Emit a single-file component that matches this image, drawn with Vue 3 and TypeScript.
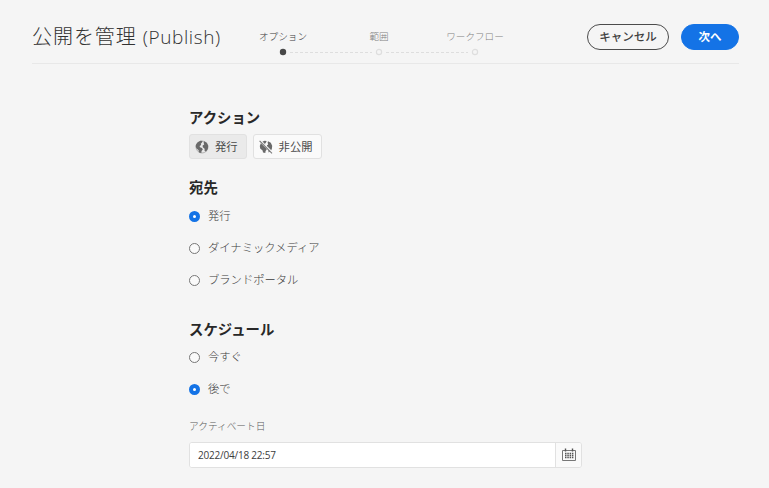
<script setup lang="ts">
import { ref } from 'vue'

const steps: string[] = ['オプション', '範囲', 'ワークフロー']
const currentStep = ref(0)
const action = ref('publish')
const destinations: string[] = ['発行', 'ダイナミックメディア', 'ブランドポータル']
const destination = ref(0)
const schedules: string[] = ['今すぐ', '後で']
const schedule = ref(1)
const activationDate = ref('2022/04/18 22:57')
</script>

<template>
  <main class="page">
    <header class="header">
      <h1 class="title"><span class="title-main">公開を管理</span><span class="title-sub">(Publish)</span></h1>
      <ol class="steps">
        <li v-for="(step, i) in steps" :key="step" class="step" :class="{ active: i === currentStep }">
          <span class="step-label">{{ step }}</span>
          <span class="track">
            <svg class="rail" width="96" height="8" viewBox="0 0 96 8">
              <path v-if="i > 0" d="M0 4.5H41" stroke="#dedede" stroke-dasharray="3 2" stroke-dashoffset="1" />
              <circle v-if="i === currentStep" cx="48" cy="4" r="3.2" fill="#484848" />
              <circle v-else cx="48" cy="4" r="2.6" fill="#f5f5f5" stroke="#dedede" stroke-width="1.2" />
              <path v-if="i < steps.length - 1" d="M55 4.5H96" stroke="#dedede" stroke-dasharray="3 2" />
            </svg>
          </span>
        </li>
      </ol>
      <div class="buttons">
        <button class="pill cancel">キャンセル</button>
        <button class="pill next" @click="currentStep = Math.min(currentStep + 1, 2)">次へ</button>
      </div>
    </header>

    <form class="form" @submit.prevent>
      <h2 class="heading">アクション</h2>
      <div class="actions">
        <button class="action" :class="{ selected: action === 'publish' }" @click="action = 'publish'">
          <svg class="globe" width="14" height="14" viewBox="0 0 14 14">
            <circle cx="7" cy="7" r="6" fill="none" stroke="#a4a4a4" stroke-width=".8" />
            <path d="M.8 5 2.4 2.4 5.4 .8 7.6 1 7 2.6 5.8 3.8 6.2 5 4.6 6 5 7.2 7 8 7.8 9.4 6.6 11 6.3 13.1 4 12.4 3.6 10.2 1.6 8.6 .8 7ZM9 1.2 11.8 2.8 13.2 5.7 12.9 8.8 11.2 11.6 9.6 11 9.6 8.8 7.8 7.2 7.6 5.6 9.2 4.4 8.6 2.8Z" fill="#6a6a6a" />
          </svg>
          <span>発行</span>
        </button>
        <button class="action" :class="{ selected: action === 'unpublish' }" @click="action = 'unpublish'">
          <svg class="globe" width="14" height="14" viewBox="0 0 14 14">
            <path d="M.8 6 1.8 3.3 7 8.2 7.8 9.5 6.6 11 6.3 13.1 4 12.4 3.6 10.4 1.2 8.6ZM3.2 1.8 5.6 .8 7.6 1 7 2.6 6 3.8 6.3 5ZM9 1.2 11.8 2.8 13.2 5.7 12.9 8.8 12.1 10.4 7.8 6.2 8 5.2 9.2 4.4 8.6 2.8ZM9.3 9.4 11.2 11.4 9.6 12.4Z" fill="#6a6a6a" />
            <path d="M1.8 .4 13.7 12.3" stroke="#fafafa" stroke-width="1" />
            <path d="M.6 .9 13 13.3" stroke="#777" stroke-width="1.1" />
          </svg>
          <span>非公開</span>
        </button>
      </div>

      <h2 class="heading destination-heading">宛先</h2>
      <div class="radios destinations">
        <label v-for="(item, i) in destinations" :key="item" class="radio" @click="destination = i">
          <span class="dot" :class="{ checked: destination === i }"></span>
          <span class="radio-text">{{ item }}</span>
        </label>
      </div>

      <h2 class="heading schedule-heading">スケジュール</h2>
      <div class="radios">
        <label v-for="(item, i) in schedules" :key="item" class="radio" @click="schedule = i">
          <span class="dot" :class="{ checked: schedule === i }"></span>
          <span class="radio-text">{{ item }}</span>
        </label>
      </div>

      <div class="date-label">アクティベート日</div>
      <div class="date-field">
        <input v-model="activationDate" class="date-input" type="text" />
        <button class="calendar">
          <svg width="14" height="14" viewBox="0 0 14 14">
            <path d="M.5 2.5H13.5V12.5H.5Z" fill="none" stroke="#777" />
            <path d="M3.5.5v3M10.5.5v3" stroke="#555" stroke-width="1.4" />
            <path d="M3 5.5h8.5M3 7.5h8.5M3 9.5h8.5" stroke="#555" stroke-width="1.4" stroke-dasharray="1.5 .8" />
          </svg>
        </button>
      </div>
    </form>
  </main>
</template>

<style>
body {
  margin: 0;
  background: #f5f5f5;
}
</style>

<style scoped>
.page {
  box-sizing: border-box;
  height: 488px;
  overflow: hidden;
  background: #f5f5f5;
  color: #4b4b4b;
  font-family: "Noto Sans CJK JP", sans-serif;
}
button {
  padding: 0;
  font-family: inherit;
}
.header {
  display: flex;
  box-sizing: border-box;
  height: 64px;
  margin: 0 30px 0 32px;
  border-bottom: 1px solid #e8e8e8;
}
.title {
  display: flex;
  align-items: baseline;
  gap: 6px;
  width: 203px;
  height: 30px;
  margin: 21px 0 0;
  color: #323232;
  font-size: 20px;
  font-weight: 300;
  line-height: 30px;
  white-space: nowrap;
}
.title-main {
  letter-spacing: 0.95px;
}
.title-sub {
  font-size: 19px;
  font-family: "Open Sans", sans-serif;
  font-weight: 300;
  letter-spacing: 0.6px;
}
.steps {
  display: flex;
  margin: 28px 0 0;
  padding: 0;
  list-style: none;
}
.step {
  display: flex;
  flex-direction: column;
  align-items: center;
  width: 96px;
  color: #808080;
  font-size: 9.6px;
  font-weight: 300;
  line-height: 16px;
}
.step.active {
  color: #3c3c3c;
}
.track {
  display: flex;
  margin-top: 4px;
}
.buttons {
  display: flex;
  gap: 12px;
  margin: 24px 0 0 auto;
}
.pill {
  box-sizing: border-box;
  height: 26px;
  padding-bottom: 2px;
  border: 1px solid #4b4b4b;
  border-radius: 13px;
  font-size: 11.5px;
  line-height: 22px;
}
.cancel {
  width: 82px;
  background: transparent;
  color: #404040;
  font-weight: 500;
}
.next {
  width: 58px;
  border-color: #1473e6;
  background: #1473e6;
  color: #fff;
  font-weight: 700;
}
.form {
  width: 393px;
  margin-left: 189px;
  padding-top: 43px;
}
.heading {
  margin: 0;
  color: #282828;
  font-size: 14.4px;
  font-weight: 700;
  line-height: 20px;
}
.actions {
  display: flex;
  gap: 6px;
  margin-top: 7px;
}
.action {
  display: flex;
  align-items: center;
  box-sizing: border-box;
  gap: 6px;
  height: 25px;
  padding: 0 8px 0 5px;
  border: 1px solid #e1e1e1;
  border-radius: 3px;
  background: #fafafa;
  color: #4b4b4b;
  font-size: 11.3px;
  line-height: 23px;
}
.action.selected {
  background: #eaeaea;
}
.destination-heading {
  margin-top: 18px;
}
.radios {
  display: flex;
  flex-direction: column;
  gap: 12px;
  margin-top: 8px;
}
.destinations {
  margin-top: 9px;
}
.radio {
  display: flex;
  align-items: center;
  gap: 8px;
  height: 20px;
  color: #3c3c3c;
  font-size: 11.3px;
  font-weight: 300;
  line-height: 20px;
}
.radio-text {
  padding-bottom: 2px;
  line-height: 18px;
}
.dot {
  box-sizing: border-box;
  width: 11px;
  height: 11px;
  border: 1px solid #777;
  border-radius: 50%;
  background: #fafafa;
}
.dot.checked {
  border: 4px solid #1473e6;
  background: #fff;
}
.schedule-heading {
  margin-top: 29px;
}
.date-label {
  margin-top: 19px;
  color: #5a5a5a;
  font-size: 9.7px;
  font-weight: 300;
  line-height: 16px;
}
.date-field {
  display: flex;
  box-sizing: border-box;
  height: 26px;
  margin-top: 8px;
  border: 1px solid #e1e1e1;
  border-radius: 3px;
  background: #fff;
  overflow: hidden;
}
.date-input {
  flex: 1;
  min-width: 0;
  padding: 0 8px 1px;
  border: 0;
  outline: 0;
  background: #fff;
  color: #3c3c3c;
  font: 10px "Open Sans", sans-serif;
  letter-spacing: -0.22px;
}
.calendar {
  display: flex;
  align-items: center;
  justify-content: center;
  width: 26px;
  border: 0;
  border-left: 1px solid #e1e1e1;
  background: #fafafa;
}
</style>
